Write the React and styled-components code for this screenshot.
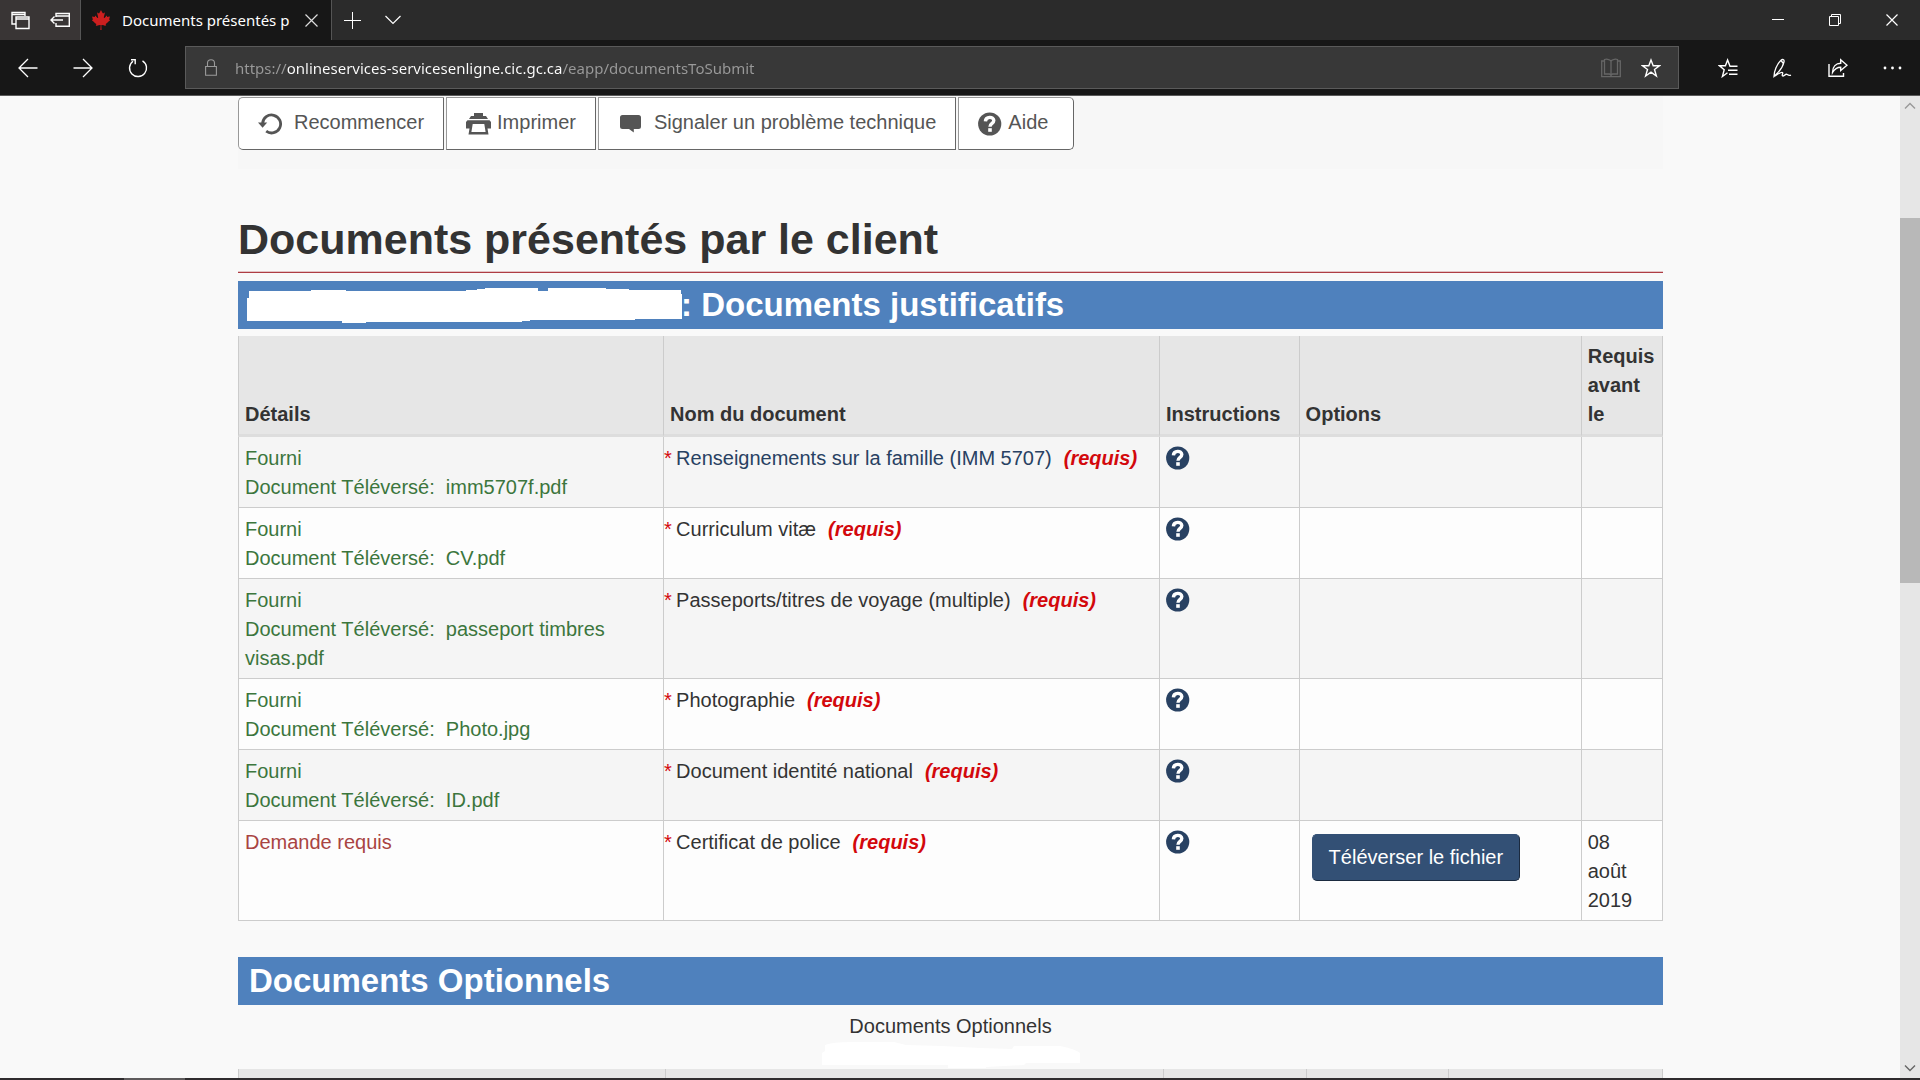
import React from 'react'
import styled, { createGlobalStyle, css } from 'styled-components'
import { FaCanadianMapleLeaf } from 'react-icons/fa'

const GlobalStyle = createGlobalStyle`
    * {
        box-sizing: border-box;
    }

    body {
        margin: 0;
        overflow: hidden;
        background-color: #f9f9f9;
        color: #333;
        font-family: "Liberation Sans", Arial, sans-serif;
        font-size: 20px;
        line-height: 29px;
    }

    h1, h2, p {
        margin: 0;
    }
`

/* ---------- browser window ---------- */

const Window = styled.div`
    display: flex;
    flex-direction: column;
    height: 100vh;
`

const Taskbar = styled.div`
    height: 2px;
    padding-left: 124px;
    background-color: #2f2c2e;

    .active {
        width: 61px;
        height: 2px;
        background-color: #5e5b5c;
    }
`

const TitleBar = styled.div`
    display: flex;
    height: 40px;
    background-color: #2b2b2b;
`

const TabTools = styled.div`
    display: flex;
    background-color: #393535;
`

const Tab = styled.div`
    display: flex;
    align-items: center;
    width: 252px;
    padding: 0 13px 0 10px;
    background-color: #171717;
    border-left: 1px solid #555;
    border-right: 1px solid #555;
    color: #fff;
    font-family: "Noto Sans", "Open Sans", sans-serif;
    font-size: 15px;
    line-height: 20px;

    .tab-title {
        flex: 1;
        margin-left: 11px;
        overflow: hidden;
        white-space: nowrap;
    }
`

const ChromeButton = styled.button`
    display: flex;
    align-items: center;
    justify-content: center;
    width: ${props => props.$width}px;
    height: 100%;
    padding: 0;
    border: 0;
    background: none;
    color: ${props => props.$color || '#fff'};
`

const Spacer = styled.div`
    flex: 1;
`

const NavBar = styled.div`
    display: flex;
    align-items: center;
    height: 56px;
    background-color: #171717;
    border-bottom: 1px solid #5a5a5a;
`

const AddressBar = styled.div`
    flex: 1;
    display: flex;
    align-items: center;
    height: 43px;
    margin: 0 21px 0 20px;
    padding: 0 7px 0 19px;
    background-color: #383838;
    border: 1px solid #5a5a5a;
`

/* host name is brighter than the scheme and the path */
const AddressInput = styled.input`
    flex: 1;
    min-width: 0;
    height: 30px;
    margin-left: 18px;
    padding: 0;
    border: 0;
    outline: 0;
    font-family: "Noto Sans", "Open Sans", sans-serif;
    font-size: 15px;
    color: transparent;
    background-image: linear-gradient(to right, #9a9a9a 52px, #fff 52px, #fff 327px, #9a9a9a 327px);
    background-clip: text;
    -webkit-background-clip: text;
`

const Viewport = styled.div`
    flex: 1;
    display: flex;
    min-height: 0;
`

const ScrollBar = styled.div`
    display: flex;
    flex-direction: column;
    width: 20px;
    background-color: #e6e6e6;
    color: #999;

    .track {
        flex: 1;
        padding-top: 102px;
    }

    .thumb {
        height: 43.5%;
        min-height: 20px;
        background-color: #b8b8b8;
    }
`

const ScrollButton = styled.button`
    display: flex;
    align-items: center;
    justify-content: center;
    height: 20px;
    padding: 0;
    border: 0;
    background: none;
    color: ${props => props.$color};
`

/* ---------- page ---------- */

const Page = styled.main`
    flex: 1;
    min-width: 0;
    overflow: hidden;
    padding: 0 237px 0 238px;
`

const Toolbar = styled.div`
    display: flex;
    gap: 2px;
    padding: 1px 0 19px;
    background-color: #f7f7f7;
`

const ToolButton = styled.button`
    display: flex;
    align-items: center;
    gap: ${props => (props.$wide ? 12 : 6)}px;
    height: 53px;
    padding: 0 19px 2px;
    border: 1px solid #666;
    border-top-color: #999;
    border-left-color: #999;
    background-color: #fff;
    color: #555;
    font: inherit;
    white-space: nowrap;

    svg {
        position: relative;
        top: 1px;
    }

    &:first-child {
        border-radius: 5px 0 0 5px;
    }

    &:last-child {
        padding-right: 25px;
        border-radius: 0 5px 5px 0;
    }
`

const Title = styled.h1`
    margin-top: 46px;
    padding-bottom: 9px;
    border-bottom: 1px solid #af3c43;
    box-shadow: inset 0 -1px #e3c4c6;
    font-size: 43px;
    line-height: 48px;
`

const Band = styled.h2`
    display: flex;
    align-items: center;
    height: 48px;
    margin-top: ${props => props.$gap}px;
    padding-left: 11px;
    background-color: #4f81bd;
    color: #fff;
    font-size: 33px;
    line-height: 48px;
    white-space: nowrap;

    svg {
        overflow: visible;
    }
`

const Table = styled.table`
    width: 100%;
    margin-top: ${props => props.$gap || 0}px;
    table-layout: fixed;
    border-spacing: 0;
    text-align: left;
`

const cell = css`
    border-right: 1px solid #ccc;

    &:first-child {
        border-left: 1px solid #ccc;
    }
`

const Th = styled.th`
    ${cell}
    width: ${props => props.$width};
    height: 101px;
    padding: 6px 6px 5px;
    border-bottom: 3px solid #ddd;
    background-color: #e6e6e6;
    vertical-align: bottom;
`

const Td = styled.td`
    ${cell}
    padding: 7px 6px 5px;
    border-bottom: 1px solid #ccc;
    vertical-align: top;
`

const Row = styled.tr`
    background-color: #fdfdfd;

    &:nth-child(odd) {
        background-color: #f5f5f5;
    }
`

const Status = styled.div`
    color: ${props => (props.$missing ? '#a94442' : '#3c763d')};
`

const DocumentName = styled.div`
    display: flex;
    margin-left: -6px;
    white-space: nowrap;

    .mark {
        width: 12px;
        color: #d3080c;
    }

    a {
        color: #284162;
        text-decoration: none;
    }

    strong {
        margin-left: 12px;
        color: #d3080c;
        font-style: italic;
    }
`

const HelpLink = styled.a`
    display: flex;
    align-items: center;
    height: 27px;
    color: #284162;
`

const UploadButton = styled.button`
    display: block;
    height: 47px;
    margin: 6px;
    padding: 0 16px;
    border: 1px solid #335075;
    border-right-color: #1b2a3f;
    border-bottom-color: #1b2a3f;
    border-radius: 5px;
    background-color: #335075;
    color: #fff;
    font: inherit;
    white-space: nowrap;
`

const Caption = styled.p`
    display: flex;
    flex-direction: column;
    align-items: center;
    margin-top: 7px;
`

/* ---------- icons ---------- */

function Icon({ w = 20, h = 20, stroke = 1, children }) {
    return (
        <svg width={w} height={h} viewBox={`0 0 ${w} ${h}`} fill="none" stroke="currentColor" strokeWidth={stroke} aria-hidden="true">
            {children}
        </svg>
    )
}

const TabsIcon = () => (
    <Icon stroke={1.4}>
        <path d="M6 14H2V2.5H15V6M2 4.5H15" />
        <path d="M6 7H19V18.5H6Z M6 9H19" />
    </Icon>
)

const SetAsideIcon = () => (
    <Icon w={20} h={16} stroke={1.4}>
        <path d="M6 5V1.5H19.3V14.3H6V11M6 4H19" />
        <path d="M1 8H13M4.5 4.5L1 8L4.5 11.5" />
    </Icon>
)

const CloseIcon = ({ size = 13 }) => (
    <Icon w={size} h={size} stroke={1.2}>
        <path d={`M0.5 0.5L${size - 0.5} ${size - 0.5}M${size - 0.5} 0.5L0.5 ${size - 0.5}`} />
    </Icon>
)

const PlusIcon = () => (
    <Icon w={17} h={17}>
        <path d="M8.5 0V17M0 8.5H17" />
    </Icon>
)

const ChevronIcon = () => (
    <Icon w={16} h={10} stroke={1.2}>
        <path d="M0.5 1L8 8.5L15.5 1" />
    </Icon>
)

const BackIcon = () => (
    <Icon stroke={1.3}>
        <path d="M19.5 10H1M10 1L1 10L10 19" />
    </Icon>
)

const ForwardIcon = () => (
    <Icon stroke={1.3}>
        <path d="M0.5 10H19M10 1L19 10L10 19" />
    </Icon>
)

const ReloadIcon = () => (
    <Icon stroke={1.4}>
        <path d="M14.5 2.8A8.5 8.5 0 1 1 5 3.2" />
        <path d="M3 1.7H7.2V6.3" />
    </Icon>
)

const LockIcon = () => (
    <Icon w={12} h={17} stroke={1.1}>
        <path d="M0.6 7.5H11.4V16.3H0.6ZM2.5 7.5V4C2.5 -0.4 9.5 -0.4 9.5 4V7.5" />
    </Icon>
)

const BookIcon = () => (
    <Icon stroke={1.3}>
        <path d="M10 3C8.5 1 5 1 3.5 1.5V16H8.5L10 17.3L11.5 16H16.5V1.5C15 1 11.5 1 10 3ZM10 3V17" />
        <path d="M3.5 3H0.7V18.6H19.3V3H16.5" />
    </Icon>
)

const StarIcon = () => (
    <Icon stroke={1.4}>
        <path d="M10 2L12.2 7.8H18.5L13.5 11.5L15.4 18L10 14.2L4.6 18L6.5 11.5L1.5 7.8H7.8Z" />
    </Icon>
)

const FavoritesIcon = () => (
    <Icon stroke={1.4}>
        <path d="M19.5 8.2H12L9.6 2L7.4 7.8H1.5L6.2 11.7L4.4 18.5L9.5 14.8" />
        <path d="M10 12.2H19.5M11 16.3H19.5" />
    </Icon>
)

const PenIcon = () => (
    <Icon stroke={1.3}>
        <path d="M1 18.5C1 13 4 6 8 2.2C9.4 1 11.6 1.3 11 3.8C10 8.5 6 14 1 18.5ZM8 2.5L10 5M2 18C6 15.5 8 13.5 9.5 14.5C10.5 15.5 8 17.7 10 18C12 18.2 12 15.6 14 16.4C15.5 17.5 16 18 18 17.2" />
    </Icon>
)

const ShareIcon = () => (
    <Icon stroke={1.4}>
        <path d="M1 6V18.3H15.5V15" />
        <path d="M4.5 14.5C4.5 8.5 8 5.3 12.7 5.2V1.8L19 7.2L12.7 12.5V9.2C9 9.2 6.5 11 4.5 14.5Z" />
    </Icon>
)

const MoreIcon = () => (
    <svg width="20" height="4" fill="currentColor" aria-hidden="true">
        <circle cx="2" cy="2" r="1.4" />
        <circle cx="9.5" cy="2" r="1.4" />
        <circle cx="17" cy="2" r="1.4" />
    </svg>
)

const MinimizeIcon = () => (
    <Icon w={12} h={12}>
        <path d="M0 5.5H12" />
    </Icon>
)

const RestoreIcon = () => (
    <Icon w={12} h={12}>
        <path d="M0.5 2.5H9.5V11.5H0.5ZM2.5 2.5V0.5H11.5V9.5H9.5" />
    </Icon>
)

const ArrowIcon = ({ down }) => (
    <Icon w={12} h={8} stroke={1.4}>
        <path d={down ? 'M1 1.5L6 6.5L11 1.5' : 'M1 6.5L6 1.5L11 6.5'} />
    </Icon>
)

const RestartIcon = () => (
    <Icon w={24} h={22} stroke={2.8}>
        <path d="M4.6 10.5A9 9 0 1 1 8.2 18.2" />
        <path d="M0 9.5H9.2L4.6 14.8Z" fill="currentColor" stroke="none" />
    </Icon>
)

const PrinterIcon = () => (
    <svg width="25" height="22" viewBox="0 0 25 22" fill="currentColor" fillRule="evenodd" aria-hidden="true">
        <path d="M8 0H17V3H20L22 6H3L5 3H8Z" />
        <path d="M1.5 7.2H23.5L25 9V15.5H21.5L22.5 21.5H2.5L3.5 15.5H0V9ZM6.7 11L5.4 19H19.6L18.3 11Z" />
    </svg>
)

const CommentIcon = () => (
    <svg width="24" height="20" viewBox="0 0 24 20" fill="currentColor" aria-hidden="true">
        <path d="M4.5 1H20.5Q23 1 23 3.5V12.5Q23 15 20.5 15H15.8V18.5L11 15H4.5Q2 15 2 12.5V3.5Q2 1 4.5 1Z" />
    </svg>
)

const HelpIcon = () => (
    <svg width="24" height="24" viewBox="0 0 24 24" aria-hidden="true">
        <circle cx="11.7" cy="12" r="11.6" fill="currentColor" />
        <path d="M7.4 9.4C7.6 4.2 15.8 4.2 15.8 8.6C15.8 11.6 12 11.3 12 14.8" fill="none" stroke="#fff" strokeWidth="3.4" />
        <path d="M10.2 16.2H13.8V19.8H10.2Z" fill="#fff" />
    </svg>
)

// blanked out applicant name
const HiddenName = () => (
    <svg width="432" height="36" viewBox="1 0 432 36" fill="#fff" aria-hidden="true">
        <path d="M-1 11H1V4H63V3H98V4H218V3H229V2H237V1H290V4H300V1H358V2H381V3H433V7H434V32H387V33H282V34H274V35H118V36H94V34H-1Z" />
    </svg>
)

const HiddenCaption = () => (
    <svg width="258" height="28" viewBox="0 0 258 28" fill="#fff" aria-hidden="true">
        <path d="M0 12L3 10V4Q10 1 30 1H72L84 4L120 5L158 7L190 8L192 5H238Q253 8 258 12V22H204L202 24L164 26V27H126V24H0Z" />
    </svg>
)

/* ---------- data ---------- */

const documents = [
    { file: 'imm5707f.pdf', name: 'Renseignements sur la famille (IMM 5707)', link: true },
    { file: 'CV.pdf', name: 'Curriculum vitæ' },
    { file: 'passeport timbres visas.pdf', name: 'Passeports/titres de voyage (multiple)' },
    { file: 'Photo.jpg', name: 'Photographie' },
    { file: 'ID.pdf', name: 'Document identité national' },
    { name: 'Certificat de police', due: ['08', 'août', '2019'] },
]

const columns = [
    ['Détails', '29.9%'],
    ['Nom du document', '34.8%'],
    ['Instructions', '9.8%'],
    ['Options', '19.8%'],
    ['Requis avant le', '5.7%'],
]

const optionalColumns = ['30%', '35%', '10%', '10%', '15%']

function DocumentRow({ doc }) {
    return (
        <Row>
            <Td>
                {doc.file ? (
                    <Status>
                        Fourni<br />
                        {`Document Téléversé:\u00a0 ${doc.file}`}
                    </Status>
                ) : (
                    <Status $missing>Demande requis</Status>
                )}
            </Td>
            <Td>
                <DocumentName>
                    <span className='mark'>*</span>
                    {doc.link ? <a href="#imm5707">{doc.name}</a> : <span>{doc.name}</span>}
                    <strong>(requis)</strong>
                </DocumentName>
            </Td>
            <Td>
                <HelpLink href="#instructions" aria-label="Instructions"><HelpIcon /></HelpLink>
            </Td>
            <Td>{doc.due && <UploadButton type="button">Téléverser le fichier</UploadButton>}</Td>
            <Td>{doc.due && doc.due.map(part => <div key={part}>{part}</div>)}</Td>
        </Row>
    )
}

function BrowserBars() {
    return (
        <>
            <TitleBar>
                <TabTools>
                    <ChromeButton $width={40}><TabsIcon /></ChromeButton>
                    <ChromeButton $width={40}><SetAsideIcon /></ChromeButton>
                </TabTools>
                <Tab>
                    <FaCanadianMapleLeaf size={20} color="#cc1f1f" />
                    <span className='tab-title'>Documents présentés p</span>
                    <ChromeButton $width={13} $color="#ddd"><CloseIcon /></ChromeButton>
                </Tab>
                <ChromeButton $width={41}><PlusIcon /></ChromeButton>
                <ChromeButton $width={40}><ChevronIcon /></ChromeButton>
                <Spacer />
                <ChromeButton $width={57}><MinimizeIcon /></ChromeButton>
                <ChromeButton $width={57}><RestoreIcon /></ChromeButton>
                <ChromeButton $width={57}><CloseIcon size={12} /></ChromeButton>
            </TitleBar>
            <NavBar>
                <ChromeButton $width={55}><BackIcon /></ChromeButton>
                <ChromeButton $width={55}><ForwardIcon /></ChromeButton>
                <ChromeButton $width={55}><ReloadIcon /></ChromeButton>
                <AddressBar>
                    <ChromeButton $width={12} $color="#9a9a9a"><LockIcon /></ChromeButton>
                    <AddressInput
                        aria-label="Adresse"
                        defaultValue="https://onlineservices-servicesenligne.cic.gc.ca/eapp/documentsToSubmit"
                    />
                    <ChromeButton $width={40} $color="#666"><BookIcon /></ChromeButton>
                    <ChromeButton $width={40}><StarIcon /></ChromeButton>
                </AddressBar>
                <ChromeButton $width={55}><FavoritesIcon /></ChromeButton>
                <ChromeButton $width={55}><PenIcon /></ChromeButton>
                <ChromeButton $width={55}><ShareIcon /></ChromeButton>
                <ChromeButton $width={55}><MoreIcon /></ChromeButton>
            </NavBar>
        </>
    )
}

export default function App() {
    return (
        <Window>
            <GlobalStyle />
            <BrowserBars />
            <Viewport>
                <Page>
                    <Toolbar>
                        <ToolButton $wide><RestartIcon />Recommencer</ToolButton>
                        <ToolButton><PrinterIcon />Imprimer</ToolButton>
                        <ToolButton $wide><CommentIcon />Signaler un problème technique</ToolButton>
                        <ToolButton><HelpIcon />Aide</ToolButton>
                    </Toolbar>

                    <Title>Documents présentés par le client</Title>

                    <Band $gap={8}><HiddenName />: Documents justificatifs</Band>
                    <Table $gap={7}>
                        <thead>
                            <tr>
                                {columns.map(([label, width]) => <Th key={label} $width={width}>{label}</Th>)}
                            </tr>
                        </thead>
                        <tbody>
                            {documents.map(doc => <DocumentRow key={doc.name} doc={doc} />)}
                        </tbody>
                    </Table>

                    <Band $gap={36}>Documents Optionnels</Band>
                    <Caption>
                        Documents Optionnels
                        <HiddenCaption />
                    </Caption>
                    <Table>
                        <thead>
                            <tr>
                                {optionalColumns.map((width, i) => <Th key={i} $width={width} />)}
                            </tr>
                        </thead>
                    </Table>
                </Page>
                <ScrollBar>
                    <ScrollButton $color="#999" aria-label="Haut"><ArrowIcon /></ScrollButton>
                    <div className='track'>
                        <div className='thumb' />
                    </div>
                    <ScrollButton $color="#666" aria-label="Bas"><ArrowIcon down /></ScrollButton>
                </ScrollBar>
            </Viewport>
            <Taskbar>
                <div className='active' />
            </Taskbar>
        </Window>
    )
}
